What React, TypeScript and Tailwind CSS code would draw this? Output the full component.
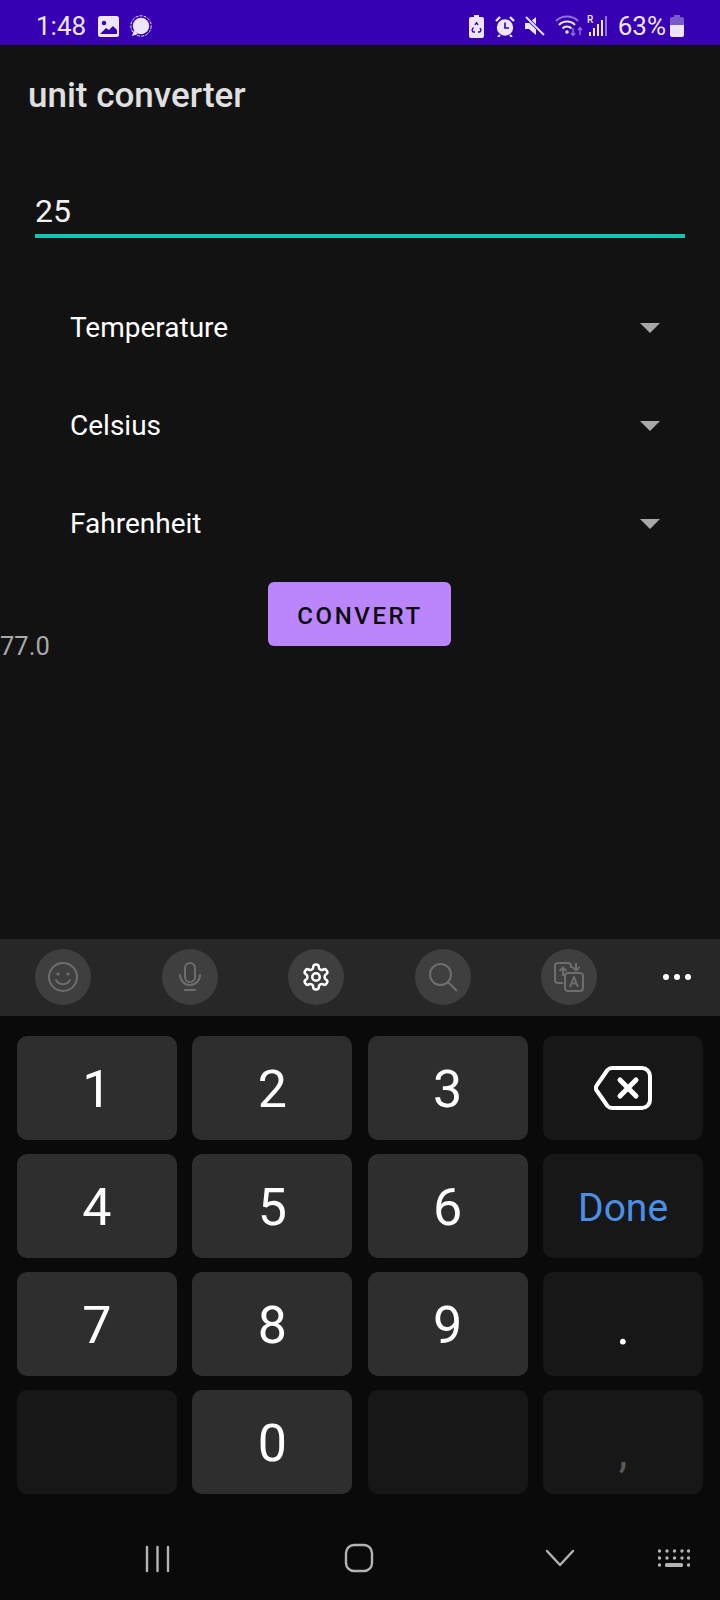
import React from "react";

const roboto = { fontFamily: "Roboto, sans-serif" };

function Spinner({ label }: { label: string }) {
  return (
    <div className="flex h-[98px] items-center justify-between pl-[70px] pr-[60px]">
      <span className="text-[28px] text-white">{label}</span>
      <svg width="20" height="10" viewBox="0 0 20 10"><path d="M0 0h20L10 10z" fill="#a8a8a8" /></svg>
    </div>
  );
}

function CircleBtn({ children, className }: { children: React.ReactNode; className?: string }) {
  return <div className={`flex h-14 w-14 items-center justify-center rounded-full bg-[#3f3f3f] ${className ?? ""}`}>{children}</div>;
}

function Key({ label, fn, color, small }: { label?: React.ReactNode; fn?: boolean; color?: string; small?: boolean }) {
  return (
    <div className={`flex h-[104px] items-center justify-center rounded-[10px] ${fn ? "bg-[#171717]" : "bg-[#2e2e2e] pt-[3px]"} ${small ? "pt-[4px] text-[39px]" : "text-[52px]"} ${color ?? "text-white"}`}>
      {label}
    </div>
  );
}

export default function App() {
  return (
    <div style={roboto} className="flex h-[1600px] w-[720px] flex-col overflow-hidden bg-[#121212]">
      {/* status bar */}
      <div className="flex h-[45px] items-center justify-between bg-[#3700b3] pl-[36px] pr-[36px] pt-[7px] text-[#ece6f8]">
        <div className="flex items-center">
          <span className="text-[26px] leading-none">1:48</span>
          <svg className="ml-[12px]" width="21" height="21" viewBox="0 0 21 21">
            <rect width="21" height="21" rx="2.5" fill="#ece6f8" />
            <circle cx="6" cy="7" r="2.2" fill="#3700b3" />
            <path d="M2 18l6-6 3 2 4-4 4 4v4z" fill="#3700b3" />
          </svg>
          <svg className="ml-[10px]" width="23" height="23" viewBox="0 0 23 23">
            <circle cx="12" cy="11" r="10.2" fill="none" stroke="#ece6f8" strokeWidth="1" strokeDasharray="3 1.2" />
            <circle cx="12" cy="11" r="8.2" fill="#ece6f8" />
            <path d="M5 15l-2 6 6-2z" fill="#ece6f8" />
          </svg>
        </div>
        <div className="flex items-center">
          <svg width="15" height="23" viewBox="0 0 15 23">
            <path d="M5 0h5v2h3a2 2 0 0 1 2 2v17a2 2 0 0 1-2 2H2a2 2 0 0 1-2-2V4a2 2 0 0 1 2-2h3z" fill="#ece6f8" />
            <path d="M6 10l1.500-2.500L9 10M11 13l1 2-1 2H9M6 17H4l-1-2 1.500-2.500" fill="none" stroke="#3700b3" strokeWidth="1.400" strokeLinejoin="round" />
          </svg>
          <svg className="ml-[11px]" width="20" height="21" viewBox="0 0 20 21">
            <circle cx="10" cy="11.5" r="8.2" fill="#ece6f8" />
            <path d="M10 6.500v5.500h4" fill="none" stroke="#3700b3" strokeWidth="1.600" />
            <path d="M1 5l4-4M19 5l-4-4" stroke="#ece6f8" strokeWidth="2.400" />
            <path d="M5 19l-2 2M15 19l2 2" stroke="#ece6f8" strokeWidth="2" />
          </svg>
          <svg className="ml-[10px]" width="20" height="20" viewBox="0 0 20 20">
            <path d="M0 7h4l7-6v18l-7-6H0z" fill="#ece6f8" />
            <path d="M1 1l18 18" stroke="#3700b3" strokeWidth="3.500" />
            <path d="M1 1l18 18" stroke="#ece6f8" strokeWidth="1.800" />
          </svg>
          <svg className="ml-[10px]" width="28" height="22" viewBox="0 0 28 22">
            <path d="M1 6a16 16 0 0 1 22 0" fill="none" stroke="#8f72d6" strokeWidth="2" />
            <path d="M4 10a11 11 0 0 1 16 0M7.500 13.500a6 6 0 0 1 9 0" fill="none" stroke="#ece6f8" strokeWidth="2" />
            <circle cx="12" cy="17" r="1.800" fill="#ece6f8" />
            <path d="M18 13v7M16 18l2 2.500 2-2.500" fill="none" stroke="#8f72d6" strokeWidth="1.400" />
            <path d="M25 20v-7M23 15l2-2.500 2 2.500" fill="none" stroke="#8f72d6" strokeWidth="1.400" />
          </svg>
          <svg className="ml-[4px]" width="20" height="22" viewBox="0 0 20 22">
            <text x="0" y="8" fontSize="10" fontFamily="Roboto, sans-serif" fontWeight="500" fill="#ece6f8">R</text>
            <rect x="2" y="17" width="2" height="4" fill="#ece6f8" />
            <rect x="6" y="13" width="2" height="8" fill="#ece6f8" />
            <rect x="10" y="9" width="2" height="12" fill="#ece6f8" />
            <rect x="14" y="5" width="2" height="16" fill="#ece6f8" />
            <rect x="18" y="1" width="2" height="20" fill="#8f72d6" />
          </svg>
          <span className="ml-[11px] text-[26px] leading-none">63%</span>
          <svg className="ml-[4px]" width="14" height="22" viewBox="0 0 14 22">
            <path d="M4 0h6v2h2a2 2 0 0 1 2 2v7H0V4a2 2 0 0 1 2-2h2z" fill="#7b5acb" />
            <path d="M0 10h14v10a2 2 0 0 1-2 2H2a2 2 0 0 1-2-2z" fill="#ece6f8" />
          </svg>
        </div>
      </div>

      {/* title */}
      <div className="flex h-[98px] items-center pl-[28px] pt-[2px] text-[35px] font-medium leading-none text-[#e0e0e0]">unit converter</div>

      {/* input */}
      <div className="mx-[35px] mt-[45px] h-[50px] border-b-4 border-[#14c4b2] pt-[1px] text-[32px] leading-[44px] text-[#f0f0f0]">25</div>

      {/* spinners */}
      <div className="mt-[41px] flex flex-col">
        <Spinner label="Temperature" />
        <Spinner label="Celsius" />
        <Spinner label="Fahrenheit" />
      </div>

      {/* button */}
      <div className="mt-[9px] flex justify-center pr-[2px]">
        <div className="flex h-[64px] w-[183px] items-center justify-center rounded-[6px] bg-[#bb86fc] pl-[2px] pt-[4px] text-[24px] font-medium tracking-[2.6px] text-[#0b0b0b]">CONVERT</div>
      </div>
      <div className="-mt-[15px] text-[25.5px] leading-[30px] text-[#a9a9a9]">77.0</div>

      <div className="flex-1" />

      {/* keyboard toolbar */}
      <div className="flex h-[77px] items-center bg-[#272727] pb-[1px] pl-[35px]">
        <CircleBtn>
          <svg width="32" height="32" viewBox="0 0 32 32" fill="none" stroke="#6e6e6e" strokeWidth="2">
            <circle cx="16" cy="16" r="14" />
            <circle cx="11" cy="13" r="1.600" fill="#6e6e6e" stroke="none" />
            <circle cx="21" cy="13" r="1.600" fill="#6e6e6e" stroke="none" />
            <path d="M9 19a8 8 0 0 0 14 0" strokeLinecap="round" />
          </svg>
        </CircleBtn>
        <CircleBtn className="ml-[71px]">
          <svg width="24" height="30" viewBox="0 0 24 30" fill="none" stroke="#6e6e6e" strokeWidth="2">
            <rect x="7" y="1" width="10" height="19" rx="5" />
            <path d="M2 13a10 10 0 0 0 20 0M7 28h10" strokeLinecap="round" />
          </svg>
        </CircleBtn>
        <CircleBtn className="ml-[70px]">
          <svg width="30" height="30" viewBox="0 0 24 24" fill="none" stroke="#ffffff" strokeWidth="2" strokeLinecap="round" strokeLinejoin="round">
            <path d="M12.22 2h-.44a2 2 0 0 0-2 2v.18a2 2 0 0 1-1 1.730l-.43.25a2 2 0 0 1-2 0l-.15-.08a2 2 0 0 0-2.730.73l-.22.38a2 2 0 0 0 .73 2.730l.15.1a2 2 0 0 1 1 1.720v.51a2 2 0 0 1-1 1.740l-.15.09a2 2 0 0 0-.73 2.730l.22.38a2 2 0 0 0 2.730.73l.15-.08a2 2 0 0 1 2 0l.43.25a2 2 0 0 1 1 1.730V20a2 2 0 0 0 2 2h.44a2 2 0 0 0 2-2v-.18a2 2 0 0 1 1-1.730l.43-.25a2 2 0 0 1 2 0l.15.08a2 2 0 0 0 2.730-.73l.22-.39a2 2 0 0 0-.73-2.730l-.15-.08a2 2 0 0 1-1-1.740v-.5a2 2 0 0 1 1-1.740l.15-.09a2 2 0 0 0 .73-2.730l-.22-.38a2 2 0 0 0-2.730-.73l-.15.08a2 2 0 0 1-2 0l-.43-.25a2 2 0 0 1-1-1.730V4a2 2 0 0 0-2-2z" />
            <circle cx="12" cy="12" r="3" />
          </svg>
        </CircleBtn>
        <CircleBtn className="ml-[71px]">
          <svg width="30" height="30" viewBox="0 0 30 30" fill="none" stroke="#6e6e6e" strokeWidth="2">
            <circle cx="12.500" cy="12.500" r="10.500" />
            <path d="M20 20l8.500 8.500" strokeLinecap="round" />
          </svg>
        </CircleBtn>
        <CircleBtn className="ml-[70px]">
          <svg width="30" height="30" viewBox="0 0 30 30" fill="none" stroke="#6e6e6e" strokeWidth="2" strokeLinejoin="round">
            <path d="M9 21H4a3 3 0 0 1-3-3V4a3 3 0 0 1 3-3h10a3 3 0 0 1 3 3v2" />
            <rect x="11" y="11" width="18" height="18" rx="3" />
            <path d="M9 14V6M5.500 9L9 5.500 12.500 9" />
            <path d="M22 1v7M18.500 5L22 8.500 25.500 5" />
            <path d="M16 25l4-10 4 10M17.500 21.500h5" />
          </svg>
        </CircleBtn>
        <div className="ml-[66px] flex h-14 w-[28px] items-center justify-between">
          <span className="h-[6px] w-[6px] rounded-full bg-white" />
          <span className="h-[6px] w-[6px] rounded-full bg-white" />
          <span className="h-[6px] w-[6px] rounded-full bg-white" />
        </div>
      </div>

      {/* keys */}
      <div className="h-[584px] bg-[#0a0a0a] pl-[17px] pr-[17px] pt-[20px]">
        <div className="grid grid-cols-4 gap-x-[15.500px] gap-y-[14px]">
          <Key label="1" />
          <Key label="2" />
          <Key label="3" />
          <Key fn label={
            <svg width="58" height="44" viewBox="0 0 58 44" fill="none" stroke="#ffffff" strokeWidth="4" strokeLinejoin="round" strokeLinecap="round">
              <path d="M18 2h30a8 8 0 0 1 8 8v24a8 8 0 0 1-8 8H18a6 6 0 0 1-4.500-2L3 25a5 5 0 0 1 0-6L13.500 4a6 6 0 0 1 4.500-2z" />
              <path d="M26 14l16 16M42 14L26 30" strokeWidth="5" />
            </svg>
          } />
          <Key label="4" />
          <Key label="5" />
          <Key label="6" />
          <Key fn small label="Done" color="text-[#4a8fe8]" />
          <Key label="7" />
          <Key label="8" />
          <Key label="9" />
          <Key fn label={<span className="mt-[6px] text-[52px] leading-none">.</span>} />
          <Key fn />
          <Key label="0" />
          <Key fn />
          <Key fn color="text-[#5a5a5a]" label={<span className="mt-[20px] text-[44px] leading-none">,</span>} />
        </div>

        {/* nav bar */}
        <div className="relative mt-[14px] h-[76px]">
          <svg className="absolute left-[126px] top-[36px]" width="30" height="30" viewBox="0 0 30 30" stroke="#b4b4b4" strokeWidth="2.400" strokeLinecap="round">
            <path d="M4 3v24M14.500 3v24M25 3v24" />
          </svg>
          <svg className="absolute left-[327px] top-[35px]" width="30" height="30" viewBox="0 0 30 30" fill="none" stroke="#b4b4b4" strokeWidth="2.400">
            <rect x="2" y="2" width="26" height="26" rx="8" />
          </svg>
          <svg className="absolute left-[528px] top-[40px]" width="30" height="20" viewBox="0 0 30 20" fill="none" stroke="#b4b4b4" strokeWidth="2.400" strokeLinecap="round" strokeLinejoin="round">
            <path d="M2 3l13 14L28 3" />
          </svg>
          <svg className="absolute left-[641px] top-[41px]" width="32" height="20" viewBox="0 0 32 20" fill="#b4b4b4">
            {[0, 7.500, 15, 22.500, 29].map((x) => <circle key={x} cx={x + 1.500} cy="2" r="1.700" />)}
            {[0, 7.500, 15, 22.500, 29].map((x) => <circle key={x} cx={x + 1.500} cy="9" r="1.700" />)}
            <circle cx="1.500" cy="16" r="1.700" />
            <circle cx="30.500" cy="16" r="1.700" />
            <rect x="7" y="14" width="18" height="4" rx="1.500" />
          </svg>
        </div>
      </div>
    </div>
  );
}
